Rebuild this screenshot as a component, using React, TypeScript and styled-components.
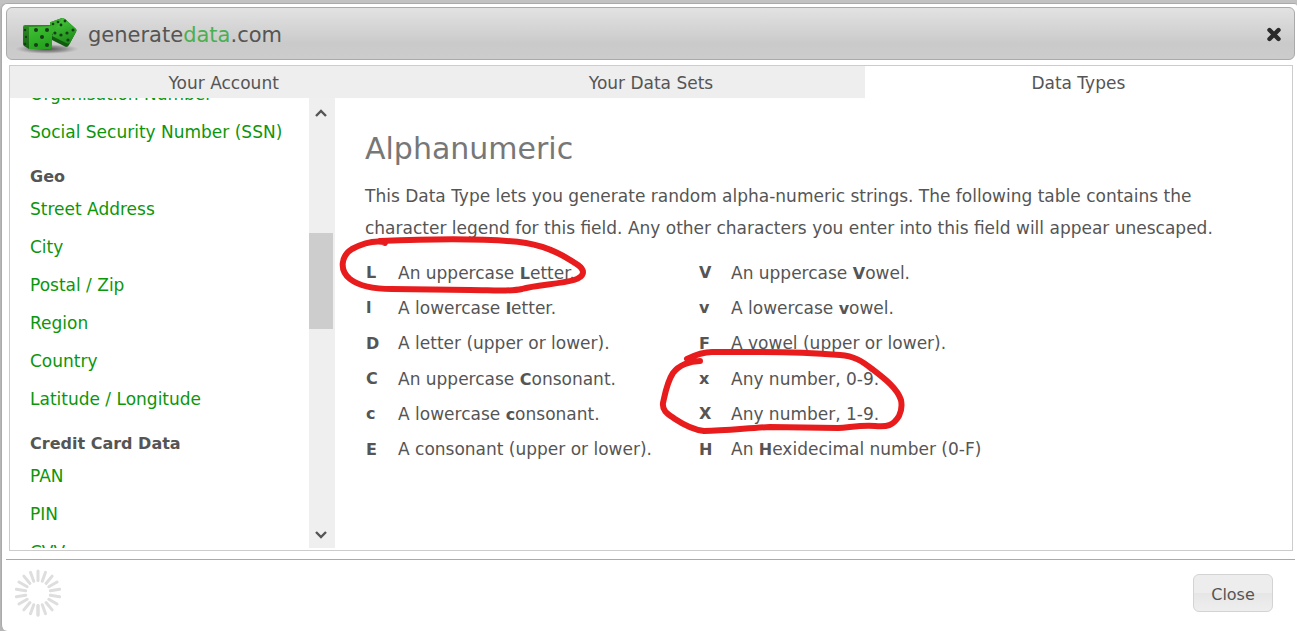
import React from "react";
import styled, { createGlobalStyle } from "styled-components";

const GlobalStyle = createGlobalStyle`
  *, *::before, *::after { box-sizing: border-box; }
  html, body, #root { height: 100%; }
  body {
    margin: 0;
    overflow: hidden;
    background: linear-gradient(#c2c2c2 0 3px, #b6b6b6 12px 100%);
    color: #555;
    font-family: Verdana, "DejaVu Sans", sans-serif;
    font-size: 17px;
  }
`;

const Page = styled.div`
  height: 100%;
  padding: 3px 0 0 1px;
`;

const Dialog = styled.section`
  display: flex;
  flex-direction: column;
  height: 100%;
  padding: 3px 2px 0 4px;
  background: #fff;
  border: 1px solid #aaa;
  border-width: 1px 0 0 1px;
  border-radius: 6px 3px 0 6px;
`;

const TitleBar = styled.header`
  display: flex;
  align-items: center;
  flex: none;
  height: 53px;
  padding: 1px 12px 0 8px;
  border: 1px solid #aaa;
  border-radius: 6px;
  background: linear-gradient(#e2e2e2, #cacaca 70%, #ccc);
`;

const Brand = styled.h2`
  flex: 1;
  margin: 0 0 0 9px;
  padding-top: 2px;
  font-size: 21px;
  font-weight: 400;
  line-height: 30px;
`;

const BrandAccent = styled.span`
  color: #4caf50;
`;

const IconButton = styled.button`
  display: flex;
  padding: 0;
  border: 0;
  background: none;
  cursor: pointer;
`;

const Panel = styled.div`
  display: flex;
  flex-direction: column;
  flex: 1;
  min-height: 0;
  margin: 5px 2px 8px 3px;
  border: 1px solid #ccc;
`;

const TabBar = styled.nav`
  display: grid;
  grid-template-columns: repeat(3, 1fr);
  flex: none;
`;

const Tab = styled.button<{ $active?: boolean }>`
  height: 32px;
  padding: 2px 0 0;
  border: 0;
  background: ${(p) => (p.$active ? "#fff" : "#eee")};
  color: #555;
  font: inherit;
  line-height: 30px;
  cursor: pointer;
`;

const Body = styled.div`
  display: flex;
  flex: 1;
  min-height: 0;
  padding-bottom: 2px;
`;

const Sidebar = styled.aside`
  flex: none;
  width: 299px;
  overflow: hidden;
  padding-left: 20px;
`;

const Groups = styled.div`
  margin-top: -23px;
`;

const GroupTitle = styled.h3`
  height: 39px;
  margin: 0;
  padding-top: 12px;
  font-size: 16px;
  line-height: 28px;
`;

const TypeList = styled.ul`
  margin: 0;
  padding: 0;
  list-style: none;
`;

const TypeLink = styled.a`
  display: block;
  color: #0b960b;
  line-height: 38px;
  text-decoration: none;
  white-space: nowrap;
`;

const ScrollTrack = styled.div`
  display: flex;
  flex-direction: column;
  flex: none;
  width: 26px;
  background: #efefef;
`;

const ScrollButton = styled.button`
  display: flex;
  align-items: center;
  justify-content: center;
  width: 24px;
  height: 28px;
  padding: 2px 0 0;
  border: 0;
  background: none;
`;

const ScrollLane = styled.div`
  flex: 1;
  padding-top: 107px;
`;

const ScrollThumb = styled.div`
  width: 24px;
  height: 96px;
  background: #cdcdcd;
`;

const Content = styled.main`
  position: relative;
  flex: 1;
  min-width: 0;
  padding: 31px 75px 0 30px;
`;

const Heading = styled.h1`
  margin: 0;
  color: #777;
  font-size: 30px;
  font-weight: 400;
  line-height: 40px;
`;

const Intro = styled.p`
  margin: 11px 0;
  line-height: 32px;
`;

const Legend = styled.table`
  height: 212px;
  border-spacing: 0;
`;

const Symbol = styled.th`
  width: 33px;
  padding: 0 0 0 1px;
  font-size: 16px;
  text-align: left;
`;

const Meaning = styled.td<{ $wide?: boolean }>`
  width: ${(p) => (p.$wide ? "300px" : "auto")};
  padding: 0;
  white-space: nowrap;

  b {
    font-size: 16px;
  }
`;

const Marks = styled.svg`
  position: absolute;
  top: 0;
  left: 0;
  width: 100%;
  height: 100%;
  overflow: visible;
  pointer-events: none;
`;

const Footer = styled.footer`
  display: flex;
  align-items: center;
  justify-content: space-between;
  flex: none;
  height: 72px;
  padding: 0 22px 5px 7px;
  border-top: 1px solid #aaa;
`;

const CloseButton = styled.button`
  width: 80px;
  height: 38px;
  padding: 2px 0 0;
  border: 1px solid #d3d3d3;
  border-radius: 6px;
  background: linear-gradient(#ededed 50%, #e6e6e6 50%, #eee);
  color: #555;
  font: inherit;
  font-size: 16px;
  cursor: pointer;
`;

type Group = { title?: string; items: string[] };

const groups: Group[] = [
  { items: ["Organisation Number", "Social Security Number (SSN)"] },
  {
    title: "Geo",
    items: ["Street Address", "City", "Postal / Zip", "Region", "Country", "Latitude / Longitude"],
  },
  { title: "Credit Card Data", items: ["PAN", "PIN", "CVV"] },
];

const legend: [string, React.ReactNode, string, React.ReactNode][] = [
  ["L", <>An uppercase <b>L</b>etter.</>, "V", <>An uppercase <b>V</b>owel.</>],
  ["l", <>A lowercase <b>l</b>etter.</>, "v", <>A lowercase <b>v</b>owel.</>],
  ["D", "A letter (upper or lower).", "F", "A vowel (upper or lower)."],
  ["C", <>An uppercase <b>C</b>onsonant.</>, "x", "Any number, 0-9."],
  ["c", <>A lowercase <b>c</b>onsonant.</>, "X", "Any number, 1-9."],
  ["E", "A consonant (upper or lower).", "H", <>An <b>H</b>exidecimal number (0-F)</>],
];

const DiceLogo = () => (
  <svg width="64" height="40" viewBox="0 0 64 40" aria-hidden="true">
    <defs>
      <linearGradient id="faceSide" x1="0" y1="0" x2="0.3" y2="1">
        <stop offset="0" stopColor="#2f8f25" />
        <stop offset="1" stopColor="#12600e" />
      </linearGradient>
      <linearGradient id="faceFront" x1="0" y1="0" x2="0.4" y2="1">
        <stop offset="0" stopColor="#3fc234" />
        <stop offset="1" stopColor="#27a31f" />
      </linearGradient>
      <linearGradient id="faceTilted" x1="0.3" y1="0" x2="0.7" y2="1">
        <stop offset="0" stopColor="#45c83a" />
        <stop offset="1" stopColor="#1d8a18" />
      </linearGradient>
      <radialGradient id="ground">
        <stop offset="0" stopColor="#222" stopOpacity="0.75" />
        <stop offset="0.6" stopColor="#444" stopOpacity="0.4" />
        <stop offset="1" stopColor="#777" stopOpacity="0" />
      </radialGradient>
    </defs>
    <ellipse cx="32" cy="35" rx="32" ry="5" fill="url(#ground)" />
    <path d="M35 9 Q35 8 36 8L47 4 Q49 4 51 6L61 15 Q62 16 61 18L54 31 Q53 33 51 33L37 26z" fill="#125a0f" />
    <path d="M35 9 Q35 8 36 8L47 4 42 14 36 22z" fill="#39b02d" />
    <path d="M47 4 Q49 4 51 6L61 15 Q62 16 61 18L55 29 Q53 30 51 29L37 22 41 14z" fill="url(#faceTilted)" />
    <path d="M8 13 Q8 11 10 11L34 11 Q37 11 37 13L37 33 Q37 35 35 35L14 35 9 32 Q8 31 8 30z" fill="url(#faceSide)" />
    <path d="M14 13 37 12 37 33 Q37 35 35 35L14 35z" fill="url(#faceFront)" />
    <g fill="#173d1a">
      <circle cx="21" cy="16" r="2" /><circle cx="32" cy="16" r="2" />
      <circle cx="27" cy="23" r="2" /><circle cx="21" cy="31" r="2" />
      <circle cx="32" cy="31" r="2" />
      <circle cx="10" cy="16" r="1.2" /><circle cx="11" cy="23" r="1.2" />
      <circle cx="10" cy="30" r="1.2" />
      <circle cx="38" cy="10" r="1.3" /><circle cx="43" cy="8" r="1.3" />
      <circle cx="50" cy="7" r="1.4" /><circle cx="46" cy="11" r="1.4" />
      <circle cx="46" cy="21" r="1.6" /><circle cx="52" cy="19" r="1.6" />
      <circle cx="58" cy="16" r="1.5" /><circle cx="40" cy="19" r="1.5" />
      <circle cx="53" cy="26" r="1.6" />
    </g>
  </svg>
);

const CloseIcon = () => (
  <svg width="16" height="16" viewBox="0 0 16 16" aria-hidden="true">
    <path d="M3.5 4 12.5 13M12.5 4 3.5 13" stroke="#2b2b2b" strokeWidth="4.4" strokeLinecap="round" />
  </svg>
);

const Chevron = ({ down }: { down?: boolean }) => (
  <svg width="12" height="10" viewBox="0 0 12 10" aria-hidden="true">
    <path d={down ? "M1 2 6 7 11 2" : "M1 8 6 3 11 8"} fill="none" stroke="#555" strokeWidth="2.4" />
  </svg>
);

const Spinner = () => (
  <svg width="50" height="50" viewBox="-25 -25 50 50" role="img" aria-label="Loading">
    <g stroke="#dedede" strokeWidth="3" strokeLinecap="round">
      {Array.from({ length: 18 }, (_, i) => (
        <path key={i} d="M0 12.5V22" transform={`rotate(${i * 20})`} />
      ))}
      <path d="M0 12.5V22" />
    </g>
  </svg>
);

export default function App() {
  return (
    <>
      <GlobalStyle />
      <Page>
        <Dialog role="dialog" aria-label="generatedata.com">
          <TitleBar>
            <DiceLogo />
            <Brand>generate<BrandAccent>data</BrandAccent>.com</Brand>
            <IconButton aria-label="Close dialog"><CloseIcon /></IconButton>
          </TitleBar>
          <Panel>
            <TabBar>
              <Tab>Your Account</Tab>
              <Tab>Your Data Sets</Tab>
              <Tab $active>Data Types</Tab>
            </TabBar>
            <Body>
              <Sidebar>
                <Groups>
                  {groups.map((group, i) => (
                    <div key={i}>
                      {group.title && <GroupTitle>{group.title}</GroupTitle>}
                      <TypeList>
                        {group.items.map((item) => (
                          <li key={item}><TypeLink href="#">{item}</TypeLink></li>
                        ))}
                      </TypeList>
                    </div>
                  ))}
                </Groups>
              </Sidebar>
              <ScrollTrack>
                <ScrollButton aria-label="Scroll up"><Chevron /></ScrollButton>
                <ScrollLane><ScrollThumb /></ScrollLane>
                <ScrollButton aria-label="Scroll down"><Chevron down /></ScrollButton>
              </ScrollTrack>
              <Content>
                <Heading>Alphanumeric</Heading>
                <Intro>
                  This Data Type lets you generate random alpha-numeric strings. The following table
                  contains the character legend for this field. Any other characters you enter into
                  this field will appear unescaped.
                </Intro>
                <Legend>
                  <tbody>
                    {legend.map(([a, aText, b, bText]) => (
                      <tr key={a}>
                        <Symbol scope="row">{a}</Symbol>
                        <Meaning $wide>{aText}</Meaning>
                        <Symbol scope="row">{b}</Symbol>
                        <Meaning>{bText}</Meaning>
                      </tr>
                    ))}
                  </tbody>
                </Legend>
                <Marks aria-hidden="true">
                  <g
                    transform="translate(-335 -98)"
                    fill="none"
                    stroke="#e81c1c"
                    strokeWidth="6"
                    strokeLinecap="round"
                    strokeLinejoin="round"
                  >
                    <path d="M385 243 380 241C430 239 490 238 526 243C550 247 566 257 578 265C586 271 584 277 574 280C560 284 535 285 522 289C510 292 490 290 470 290L392 289C372 289 359 286 350 279C339 270 341 256 352 249C363 243 374 240 385 242" />
                    <path d="M700 361C690 361 679 365 673 373C667 382 665 394 663 403C662 411 668 414 675 419C684 425 695 430 704 431C725 431 748 428 770 427L838 428C852 427 862 425 875 426C887 427 893 426 899 416C902 410 902 405 901 400C897 388 885 379 872 369C862 361 854 356 840 355C815 353 790 352 760 352L712 352C702 352 695 355 687 359" />
                  </g>
                </Marks>
              </Content>
            </Body>
          </Panel>
          <Footer>
            <Spinner />
            <CloseButton>Close</CloseButton>
          </Footer>
        </Dialog>
      </Page>
    </>
  );
}
